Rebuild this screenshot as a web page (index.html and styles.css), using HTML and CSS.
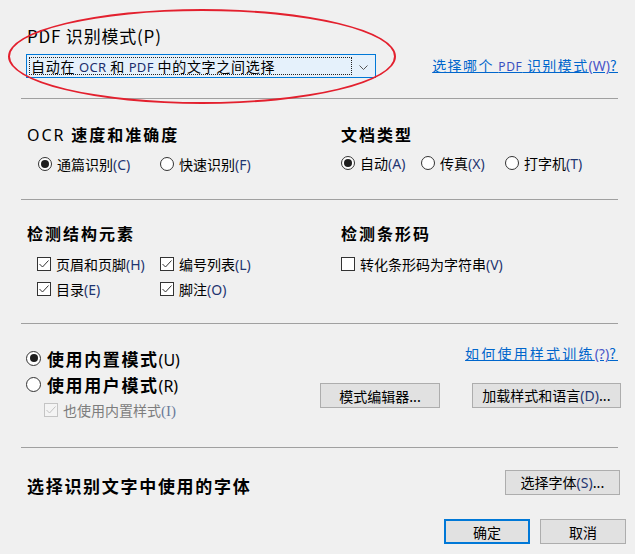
FILE: index.html
```html
<!DOCTYPE html>
<html lang="zh-CN">
<head>
<meta charset="utf-8">
<title>PDF 识别模式</title>
<link rel="stylesheet" href="styles.css">
</head>
<body>
<div class="dialog">
  <section class="sec-pdf">
    <div class="title">PDF 识别模式(P)</div>
    <div class="pdf-row">
      <div class="combo">
        <span class="combo-text">自动在 <span class="lat">OCR</span> 和 <span class="lat">PDF</span> 中的文字之间选择</span>
        <span class="combo-arrow"><svg width="9" height="5" viewBox="0 0 9 5"><polyline points="0.5,0.5 4.5,4.5 8.5,0.5" fill="none" stroke="#555" stroke-width="1"/></svg></span>
      </div>
      <a class="link" href="#">选择哪个 <span class="lat-l">PDF</span> 识别模式<span class="mn-l">(W)</span>?</a>
    </div>
  </section>
  <div class="sep"></div>

  <section class="sec-ocr cols">
    <div class="col-left">
      <div class="head"><span class="head-lat">OCR</span> 速度和准确度</div>
      <div class="opts opts-left">
        <label class="opt w122"><span class="radio on"></span><span>通篇识别<span class="mn">(C)</span></span></label>
        <label class="opt"><span class="radio"></span><span>快速识别<span class="mn">(F)</span></span></label>
      </div>
    </div>
    <div class="col-right">
      <div class="head">文档类型</div>
      <div class="opts">
        <label class="opt w80"><span class="radio on"></span><span>自动<span class="mn">(A)</span></span></label>
        <label class="opt w84"><span class="radio"></span><span>传真<span class="mn">(X)</span></span></label>
        <label class="opt"><span class="radio"></span><span>打字机<span class="mn">(T)</span></span></label>
      </div>
    </div>
  </section>
  <div class="sep"></div>

  <section class="sec-detect cols">
    <div class="col-left">
      <div class="head">检测结构元素</div>
      <div class="opts opts-check opts-leftc">
        <label class="opt w123"><span class="check"><svg width="12" height="12" viewBox="0 0 12 12"><polyline points="1.5,6 4.5,9 10.5,2.5" fill="none" stroke="#333" stroke-width="1"/></svg></span><span>页眉和页脚<span class="mn">(H)</span></span></label>
        <label class="opt"><span class="check"><svg width="12" height="12" viewBox="0 0 12 12"><polyline points="1.5,6 4.5,9 10.5,2.5" fill="none" stroke="#333" stroke-width="1"/></svg></span><span>编号列表<span class="mn">(L)</span></span></label>
      </div>
      <div class="opts opts-check2 opts-leftc">
        <label class="opt w123"><span class="check"><svg width="12" height="12" viewBox="0 0 12 12"><polyline points="1.5,6 4.5,9 10.5,2.5" fill="none" stroke="#333" stroke-width="1"/></svg></span><span>目录<span class="mn">(E)</span></span></label>
        <label class="opt"><span class="check"><svg width="12" height="12" viewBox="0 0 12 12"><polyline points="1.5,6 4.5,9 10.5,2.5" fill="none" stroke="#333" stroke-width="1"/></svg></span><span>脚注<span class="mn">(O)</span></span></label>
      </div>
    </div>
    <div class="col-right">
      <div class="head">检测条形码</div>
      <div class="opts opts-check">
        <label class="opt"><span class="check"></span><span>转化条形码为字符串<span class="mn">(V)</span></span></label>
      </div>
    </div>
  </section>
  <div class="sep"></div>

  <section class="sec-mode">
    <div class="mode-left">
      <label class="mode-row"><span class="radio big on"></span><span>使用内置模式<span class="mn-b">(U)</span></span></label>
      <label class="mode-row"><span class="radio big"></span><span>使用用户模式<span class="mn-b">(R)</span></span></label>
      <label class="mode-sub"><span class="check disabled"><svg width="12" height="12" viewBox="0 0 12 12"><polyline points="1.5,6 4.5,9 10.5,2.5" fill="none" stroke="#c2c2c2" stroke-width="1"/></svg></span><span>也使用内置样式<span class="mn-d">(I)</span></span></label>
    </div>
    <div class="mode-right">
      <div class="link-row"><a class="link link-wide" href="#">如何使用样式训练<span class="mn-l">(?)</span>?</a></div>
      <div class="btn-row">
        <button class="btn w120">模式编辑器...</button>
        <button class="btn w149">加载样式和语言<span class="mn">(D)</span>...</button>
      </div>
    </div>
  </section>
  <div class="sep"></div>

  <section class="sec-font">
    <div class="font-row">
      <div class="font-head">选择识别文字中使用的字体</div>
      <button class="btn w115">选择字体<span class="mn">(S)</span>...</button>
    </div>
    <div class="ok-row">
      <button class="btn default w86">确定</button>
      <button class="btn w86">取消</button>
    </div>
  </section>
</div>
<div class="annot"></div>
</body>
</html>
```

FILE: styles.css
```css
* { box-sizing: border-box; }
html, body { margin: 0; padding: 0; }
body {
  background: #f0f0f0;
  width: 635px;
  height: 554px;
  overflow: hidden;
  position: relative;
  font-family: "Noto Sans CJK SC", "Noto Sans", sans-serif;
  font-size: 14px;
  color: #000;
}
.dialog { padding: 0 17px 0 21px; }
.sep { height: 0; border-top: 1px solid #a0a0a0; }

/* section 1 */
.sec-pdf { padding: 26px 0 20px; }
.title { padding-left: 6px; font-size: 17px; line-height: 20px; letter-spacing: 0.8px; }
.pdf-row { display: flex; align-items: center; justify-content: space-between; margin-top: 8px; }
.combo {
  margin-left: 5px;
  width: 350px;
  height: 24px;
  border: 1px solid #0078d7;
  background: #e5f1fb;
  display: flex;
  align-items: center;
  padding: 2px 0 2px 2px;
}
.combo-text {
  width: 323px;
  height: 18px;
  border: 1px dotted #222;
  line-height: 16px;
  padding-left: 1px;
  font-size: 14px;
  letter-spacing: 0.7px;
  white-space: nowrap;
}
.combo-arrow { flex: 1; display: flex; justify-content: center; align-items: center; padding-top: 2px; }
.lat { font-family: "Noto Sans", sans-serif; font-size: 13px; color: #1c2d6b; letter-spacing: 0.3px; }
.link { color: #0066cc; text-decoration: underline; font-size: 14px; line-height: 18px; white-space: nowrap; letter-spacing: 1.4px; }
.link-wide { letter-spacing: 2.2px; }
.lat-l { font-family: "Noto Sans", sans-serif; font-size: 12px; color: #3a4fc0; letter-spacing: 0.6px; }
.mn-l { font-family: "Noto Sans", sans-serif; font-size: 14px; color: #4a56c8; letter-spacing: 0; }

/* columns */
.cols { display: grid; grid-template-columns: 320px 1fr; }
.col-left { padding-left: 6px; }
.sec-ocr { padding: 25px 0 26px; }
.sec-detect { padding: 23px 0 25px; }
.head { font-size: 16px; font-weight: 700; line-height: 20px; letter-spacing: 2px; }
.head-lat { font-weight: 400; font-family: "Noto Sans", sans-serif; }
.opts { display: flex; align-items: center; height: 18px; margin-top: 10px; }
.opts-check { margin-top: 12px; }
.opts-check2 { margin-top: 7px; }
.opts-left { padding-left: 11px; }
.opts-leftc { padding-left: 10px; }
.opt { display: flex; align-items: center; gap: 5px; white-space: nowrap; line-height: 18px; }
.w122 { width: 122px; }
.w123 { width: 123px; }
.w80 { width: 80px; }
.w84 { width: 84px; }
.mn { font-family: "Noto Sans", sans-serif; font-size: 14px; color: #1f3570; }

.radio {
  width: 14px; height: 14px;
  border: 1px solid #333;
  border-radius: 50%;
  background: #fff;
  flex: none;
  display: flex; align-items: center; justify-content: center;
}
.radio.on::after { content: ""; width: 8px; height: 8px; border-radius: 50%; background: #1e1e1e; }
.radio.big { width: 15px; height: 15px; }
.check {
  width: 14px; height: 14px;
  border: 1px solid #333;
  background: #fff;
  flex: none;
  display: block;
}
.check svg { display: block; }
.check.disabled { border-color: #c4c4c4; background: #f4f4f4; }

/* mode */
.sec-mode { display: grid; grid-template-columns: 299px 1fr; }
.mode-left { padding: 21px 0 27px 5px; }
.mode-row { height: 26px; display: flex; align-items: center; gap: 6px; font-size: 17px; font-weight: 700; letter-spacing: 1.6px; white-space: nowrap; }
.mn-b { font-family: "Noto Sans", sans-serif; font-size: 16px; font-weight: 400; letter-spacing: 0; }
.mode-sub { margin-top: 3px; height: 20px; padding-left: 18px; display: flex; align-items: center; gap: 5px; color: #7d7d7d; white-space: nowrap; }
.mn-d { font-family: "Liberation Serif", serif; font-size: 15px; color: #6a7a9a; }
.mode-right { padding-top: 19px; }
.link-row { text-align: right; line-height: 20px; }
.btn-row { display: flex; justify-content: space-between; margin: 20px -3px 0 0; }

.btn {
  height: 25px;
  border: 1px solid #adadad;
  background: #e1e1e1;
  font-family: "Noto Sans CJK SC", "Noto Sans", sans-serif;
  font-size: 14px;
  line-height: 22px;
  text-align: center;
  padding: 0;
  color: #000;
  white-space: nowrap;
}
.btn.default { border: 2px solid #0078d7; }
.w120 { width: 120px; }
.w149 { width: 149px; }
.w115 { width: 115px; }
.w86 { width: 86px; }

/* font */
.sec-font { padding-top: 22px; }
.font-row { display: flex; justify-content: space-between; align-items: flex-start; margin-right: -2px; }
.font-head { padding-left: 6px; margin-top: 6px; font-size: 17px; font-weight: 700; letter-spacing: 1.7px; line-height: 20px; }
.ok-row { display: flex; justify-content: flex-end; gap: 10px; margin: 23px -8px 0 0; }

/* annotation ellipse */
.annot {
  position: absolute;
  left: 8px; top: 9px;
  width: 388px; height: 95px;
  border: 2px solid #e3202e;
  border-radius: 50%;
  pointer-events: none;
}
```
